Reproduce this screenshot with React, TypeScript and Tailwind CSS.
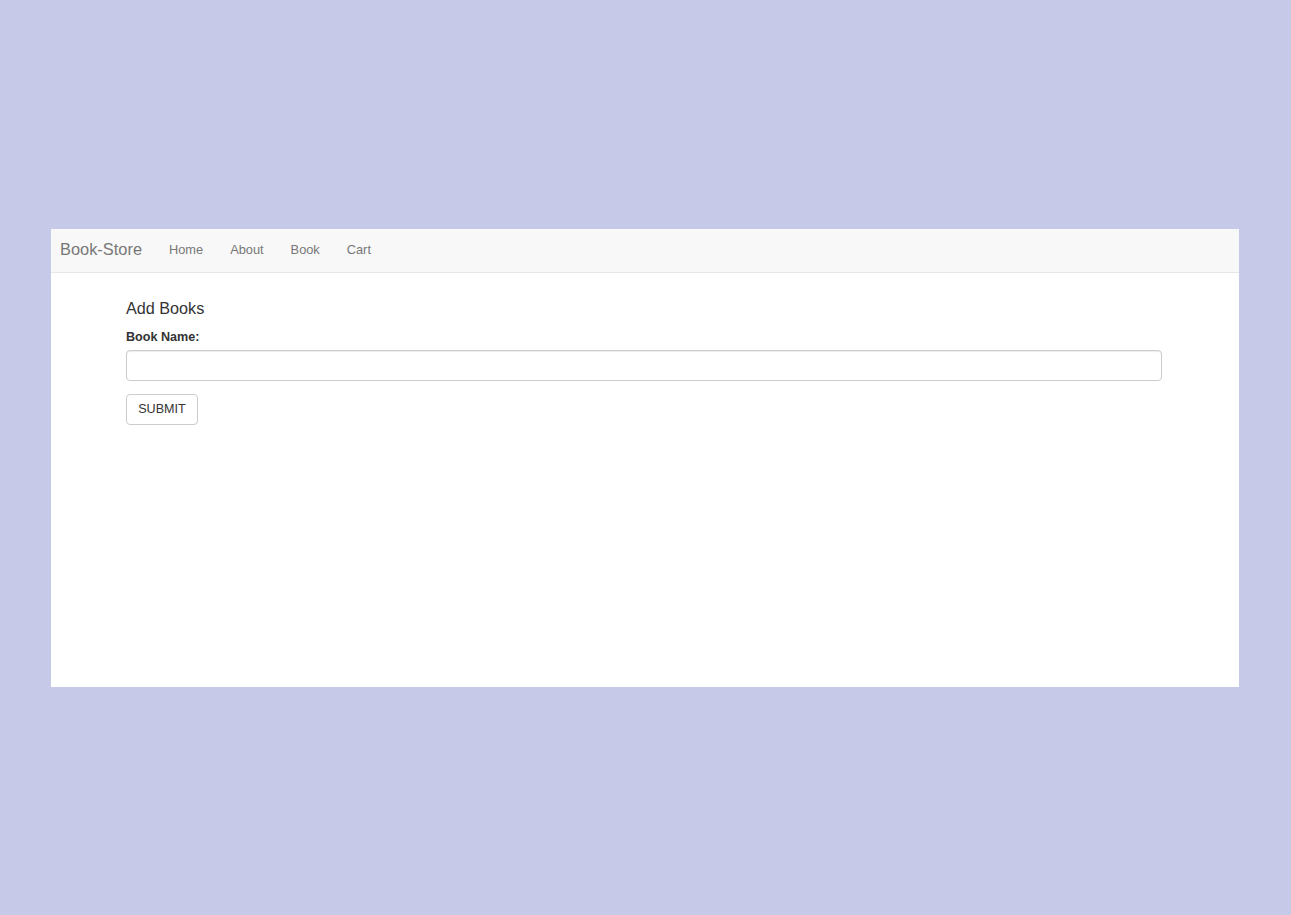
import React from "react";

export default function App() {
  return (
    <div
      className="min-h-[915px] w-full bg-[#c6c9e8] pt-[229px] pl-[51px]"
      style={{ fontFamily: '"Liberation Sans", Arial, sans-serif' }}
    >
      <div className="w-[1188px] h-[458px] bg-white">
        <nav className="h-[44px] bg-[#f8f8f8] border-b border-[#e7e7e7] flex items-center pb-[2px]">
          <span className="pl-[9px] pr-[13.5px] text-[16.4px] text-[#777]">Book-Store</span>
          {["Home", "About", "Book", "Cart"].map((l) => (
            <span key={l} className="px-[13.5px] text-[12.8px] text-[#777]">
              {l}
            </span>
          ))}
        </nav>
        <div className="pl-[75px] pr-[77px] pt-[25px]">
          <h4 className="text-[16.2px] leading-[20px] text-[#333]">Add Books</h4>
          <label className="block mt-[10px] text-[12.6px] leading-[18px] font-bold text-[#333]">
            Book Name:
          </label>
          <input
            type="text"
            className="block mt-[4px] w-full h-[31px] rounded-[4px] border border-[#ccc] bg-white shadow-[inset_0_1px_1px_rgba(0,0,0,0.075)] outline-none"
          />
          <button className="mt-[13px] w-[72px] h-[31px] rounded-[4px] border border-[#ccc] bg-white text-[12.6px] text-[#333]">
            SUBMIT
          </button>
        </div>
      </div>
    </div>
  );
}
